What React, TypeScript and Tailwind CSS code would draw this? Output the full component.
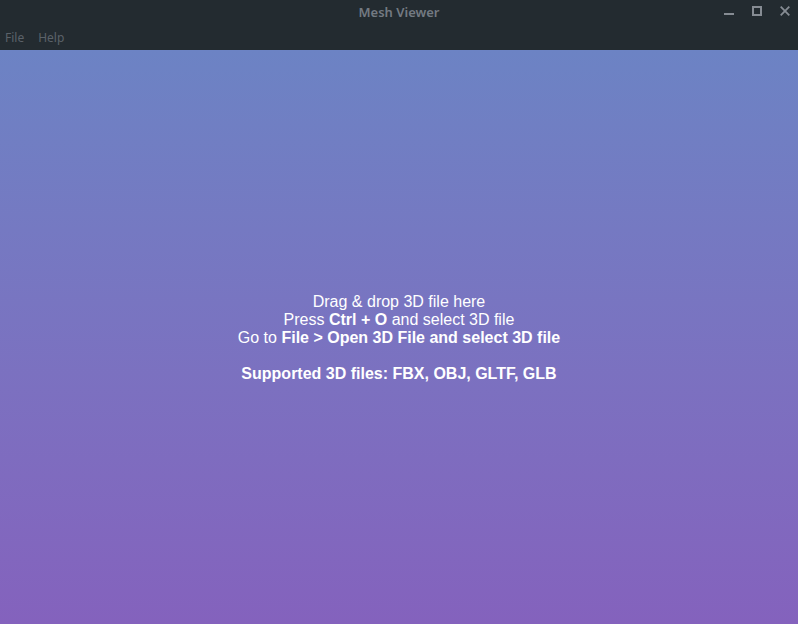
export default function App() {
  return (
    <div className="flex h-[624px] w-[798px] flex-col overflow-hidden bg-[#232b30]">
      {/* Title bar */}
      <div className="relative flex h-[25px] shrink-0 items-center justify-center">
        <span className="font-['Noto_Sans',sans-serif] text-[13px] font-semibold text-[#737a82]">
          Mesh Viewer
        </span>
        <div className="absolute right-[8px] top-[6px] flex items-start gap-[18px] text-[#868c93]">
          <svg width="10" height="10" viewBox="0 0 10 10">
            <rect x="0" y="7" width="10" height="2" fill="currentColor" />
          </svg>
          <svg width="10" height="10" viewBox="0 0 10 10">
            <rect x="1" y="1" width="8" height="8" fill="none" stroke="currentColor" strokeWidth="2" />
          </svg>
          <svg width="10" height="10" viewBox="0 0 10 10">
            <path d="M0.7 0.7 L9.3 9.3 M9.3 0.7 L0.7 9.3" stroke="currentColor" strokeWidth="1.8" />
          </svg>
        </div>
      </div>

      {/* Menu bar */}
      <div className="flex h-[25px] shrink-0 items-center gap-[14px] px-[5px] font-['Noto_Sans',sans-serif] text-[12px] text-[#5b6269]">
        <span>File</span>
        <span>Help</span>
      </div>

      {/* Drop area */}
      <div className="flex flex-1 flex-col items-center justify-center bg-gradient-to-b from-[#6c83c4] to-[#8462bd] pt-[2px] font-['Liberation_Sans',Arial,sans-serif] text-[16px] leading-[18px] text-white">
        <p>Drag &amp; drop 3D file here</p>
        <p>
          Press <b>Ctrl + O</b> and select 3D file
        </p>
        <p>
          Go to <b>File &gt; Open 3D File and select 3D file</b>
        </p>
        <p className="mt-[18px] font-bold">Supported 3D files: FBX, OBJ, GLTF, GLB</p>
      </div>
    </div>
  );
}
